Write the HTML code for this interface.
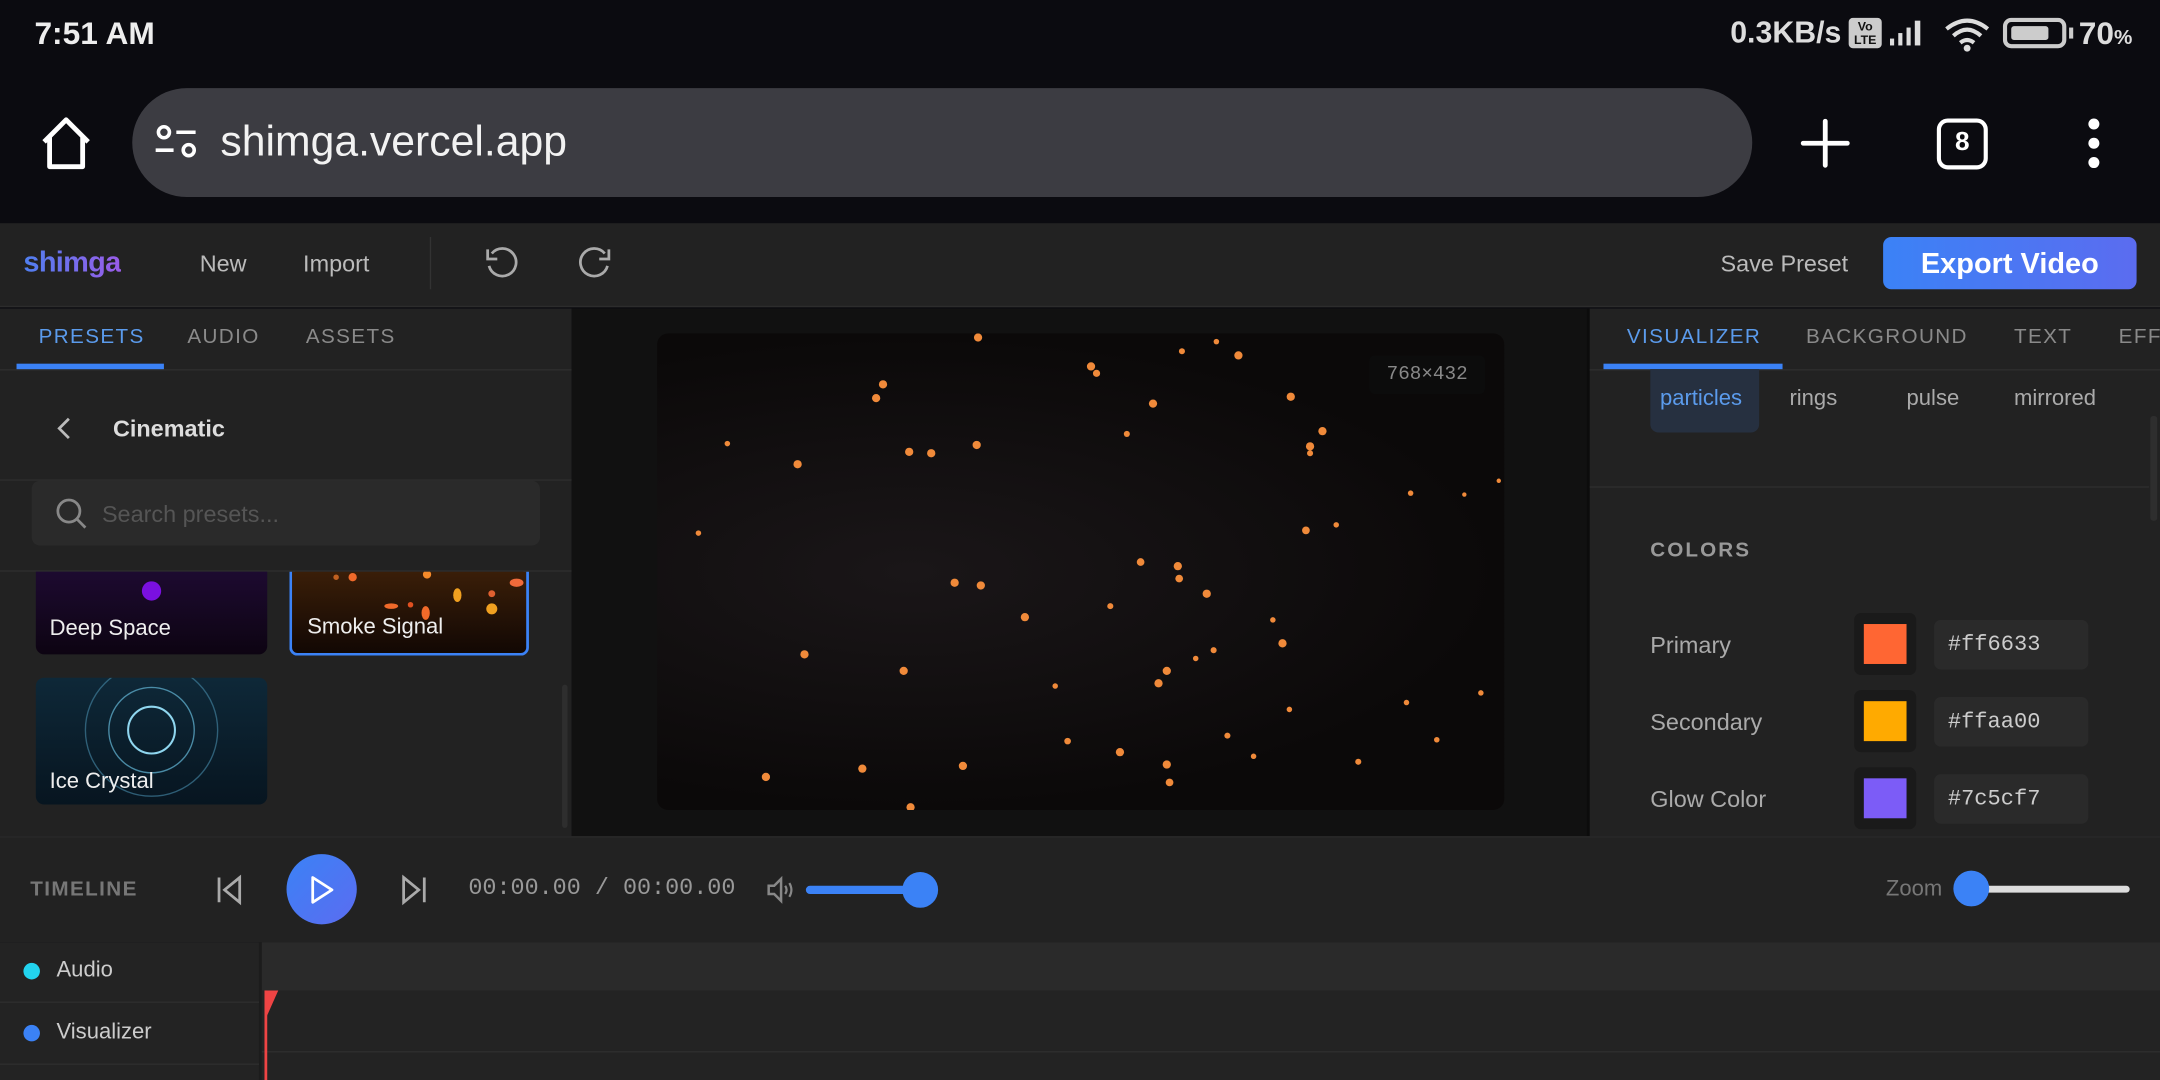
<!DOCTYPE html>
<html><head><meta charset="utf-8"><style>
*{margin:0;padding:0;box-sizing:border-box}
html,body{width:2160px;height:1080px;overflow:hidden;background:#0b0b10}
#w{position:absolute;left:0;top:0;width:1568px;height:784px;transform:scale(1.377551);transform-origin:0 0;font-family:"Liberation Sans",sans-serif;color:#ddd}
.a{position:absolute}
.tab{position:absolute;font-size:15px;letter-spacing:1px;color:#8a8a8a}
.mono{font-family:"Liberation Mono",monospace}
</style></head><body><div id="w">
<div class="a" style="left:0;top:0;width:1568px;height:162px;background:#0b0b10"></div>
<div class="a" style="left:25px;top:11px;font-size:23px;font-weight:bold;color:#eee">7:51 AM</div>
<div class="a" style="left:1256px;top:11px;font-size:22px;font-weight:bold;color:#ddd">0.3KB/s</div>
<div class="a" style="left:1342px;top:13px;width:24px;height:22px;background:#ccc;border-radius:3px;font-size:9px;line-height:10px;color:#111;text-align:center;font-weight:bold;padding-top:1px">Vo<br>LTE</div>
<svg class="a" style="left:1370px;top:12px" width="30" height="24"><rect x="2" y="16" width="3" height="5" fill="#ddd"/><rect x="8" y="12" width="3" height="9" fill="#ddd"/><rect x="14" y="8" width="3" height="13" fill="#ddd"/><rect x="20" y="3" width="4" height="18" fill="#ddd"/></svg>
<svg class="a" style="left:1410px;top:10px" width="36" height="30"><path d="M3 11 Q18 -1 33 11" stroke="#ddd" stroke-width="3" fill="none"/><path d="M8 16 Q18 7 28 16" stroke="#ddd" stroke-width="3" fill="none"/><path d="M13 21 Q18 17 23 21" stroke="#ddd" stroke-width="3" fill="none"/><circle cx="18" cy="25" r="2.5" fill="#ddd"/></svg>
<div class="a" style="left:1454px;top:13px;width:46px;height:22px;border:3px solid #ccc;border-radius:6px"><div style="margin:3px;width:27px;height:10px;background:#ccc;border-radius:2px"></div></div>
<div class="a" style="left:1502px;top:20px;width:3px;height:8px;background:#ccc"></div>
<div class="a" style="left:1509px;top:11px;font-size:23px;font-weight:bold;color:#ddd">70<span style="font-size:15px">%</span></div>
<svg class="a" style="left:28px;top:84px" width="40" height="40"><path d="M4 19 L20 3 L36 19 M8 15 V37 H32 V15" stroke="#fff" stroke-width="3.5" fill="none" stroke-linejoin="round"/></svg>
<div class="a" style="left:96px;top:64px;width:1176px;height:79px;background:#3c3c42;border-radius:40px"></div>
<svg class="a" style="left:110px;top:88px" width="36" height="32"><circle cx="9" cy="8" r="4" stroke="#fff" stroke-width="2.6" fill="none"/><line x1="18" y1="8" x2="32" y2="8" stroke="#fff" stroke-width="2.6"/><line x1="3" y1="21" x2="16" y2="21" stroke="#fff" stroke-width="2.6"/><circle cx="27" cy="21" r="4" stroke="#fff" stroke-width="2.6" fill="none"/></svg>
<div class="a" style="left:160px;top:85px;font-size:31px;color:#f2f2f2">shimga.vercel.app</div>
<svg class="a" style="left:1306px;top:85px" width="38" height="38"><path d="M19 3V35M3 19H35" stroke="#fff" stroke-width="3.5" stroke-linecap="round"/></svg>
<div class="a" style="left:1406px;top:86px;width:37px;height:37px;border:3.5px solid #fff;border-radius:8px;text-align:center;font-weight:bold;font-size:19px;line-height:30px;color:#fff">8</div>
<svg class="a" style="left:1510px;top:84px" width="20" height="40"><circle cx="10" cy="6" r="4" fill="#fff"/><circle cx="10" cy="20" r="4" fill="#fff"/><circle cx="10" cy="34" r="4" fill="#fff"/></svg>
<div class="a" style="left:0;top:162px;width:1568px;height:61px;background:#222;border-bottom:1px solid #2c2c2c"></div>
<div class="a" style="left:17px;top:179px;font-size:21px;font-weight:bold;background:linear-gradient(90deg,#4f7ff0,#9a5ce8);-webkit-background-clip:text;color:transparent;letter-spacing:-.5px">shimga</div>
<div class="a" style="left:145px;top:182px;font-size:17px;color:#bbb">New</div>
<div class="a" style="left:220px;top:182px;font-size:17px;color:#bbb">Import</div>
<div class="a" style="left:312px;top:172px;width:1px;height:38px;background:#333"></div>
<svg class="a" style="left:350px;top:177px" width="30" height="28"><path d="M7 7 A10 10 0 1 1 5 16" stroke="#aaa" stroke-width="2" fill="none"/><path d="M4 4 V11 H11" stroke="#aaa" stroke-width="2" fill="none"/></svg>
<svg class="a" style="left:416px;top:177px" width="30" height="28"><path d="M23 7 A10 10 0 1 0 25 16" stroke="#aaa" stroke-width="2" fill="none"/><path d="M26 4 V11 H19" stroke="#aaa" stroke-width="2" fill="none"/></svg>
<div class="a" style="left:1249px;top:182px;font-size:17px;color:#bbb">Save Preset</div>
<div class="a" style="left:1367px;top:172px;width:184px;height:38px;border-radius:6px;background:linear-gradient(90deg,#3b82f6,#5b6cf0);color:#fff;font-weight:bold;font-size:21px;text-align:center;line-height:39px">Export Video</div>
<div class="a" style="left:0;top:224px;width:415px;height:383px;background:#222"></div>
<div class="a" style="left:0;top:268px;width:415px;height:1px;background:#2e2e2e"></div>
<div class="tab" style="left:28px;top:236px;color:#5b9bec">PRESETS</div>
<div class="a" style="left:12px;top:264px;width:107px;height:4px;background:#3b82f6"></div>
<div class="tab" style="left:136px;top:236px">AUDIO</div>
<div class="tab" style="left:222px;top:236px">ASSETS</div>
<svg class="a" style="left:38px;top:301px" width="16" height="20"><path d="M12 3 L5 10 L12 17" stroke="#bbb" stroke-width="2" fill="none"/></svg>
<div class="a" style="left:82px;top:302px;font-size:17px;font-weight:bold;color:#ddd">Cinematic</div>
<div class="a" style="left:0;top:348px;width:415px;height:1px;background:#2e2e2e"></div>
<div class="a" style="left:23px;top:349px;width:369px;height:47px;background:#2a2a2a;border-radius:6px"></div>
<svg class="a" style="left:40px;top:361px" width="24" height="24"><circle cx="10" cy="10" r="8" stroke="#888" stroke-width="2" fill="none"/><path d="M16 16 L22 22" stroke="#888" stroke-width="2"/></svg>
<div class="a" style="left:74px;top:364px;font-size:17px;color:#555">Search presets...</div>
<div class="a" style="left:0;top:414px;width:415px;height:1px;background:#2e2e2e"></div>
<div class="a" style="left:26px;top:415px;width:168px;height:60px;background:linear-gradient(#1d0a30,#0d0412);border-radius:0 0 6px 6px"></div>
<div class="a" style="left:103px;top:422px;width:14px;height:14px;border-radius:50%;background:#7a10e0"></div>
<div class="a" style="left:36px;top:448px;font-size:16px;color:#eee">Deep Space</div>
<div class="a" style="left:210px;top:415px;width:174px;height:61px;background:linear-gradient(#3a1e08,#120804);border:2px solid #3b82f6;border-top:none;border-radius:0 0 6px 6px;overflow:hidden">
<svg width="174" height="60"><circle cx="44" cy="4" r="3" fill="#f06a2a"/><circle cx="98" cy="2" r="3" fill="#f58a2a"/><ellipse cx="120" cy="17" rx="3" ry="5" fill="#f0a020"/><ellipse cx="97" cy="30" rx="3" ry="5" fill="#f06a2a"/><circle cx="145" cy="16" r="2.5" fill="#e06030"/><circle cx="145" cy="27" r="4" fill="#f0a020"/><ellipse cx="163" cy="8" rx="5" ry="3" fill="#f06a3a"/><ellipse cx="72" cy="25" rx="5" ry="2" fill="#f06a2a"/><circle cx="86" cy="24" r="2" fill="#e05020"/><circle cx="32" cy="4" r="2" fill="#c06020"/></svg></div>
<div class="a" style="left:223px;top:447px;font-size:16px;color:#eee">Smoke Signal</div>
<div class="a" style="left:26px;top:492px;width:168px;height:92px;background:linear-gradient(#0e2838,#071520);border-radius:6px;overflow:hidden">
<svg width="168" height="92"><circle cx="84" cy="38" r="17" stroke="#8fd6ef" stroke-width="1.5" fill="none"/><circle cx="84" cy="38" r="31" stroke="#5aa6c4" stroke-width="1" fill="none" opacity=".8"/><circle cx="84" cy="38" r="48" stroke="#3f7c98" stroke-width="1" fill="none" opacity=".7"/></svg></div>
<div class="a" style="left:36px;top:559px;font-size:16px;color:#eee">Ice Crystal</div>
<div class="a" style="left:408px;top:497px;width:4px;height:104px;background:#2e2e2e;border-radius:2px"></div>
<div class="a" style="left:415px;top:224px;width:737px;height:383px;background:#111"></div>
<div class="a" style="left:477px;top:242px;width:615px;height:346px;background:radial-gradient(ellipse at 30% 50%,#1a1618,#0b0909 70%);border-radius:8px;overflow:hidden">
<svg width="615" height="346" viewBox="477 242 615 346"><g fill="#f08a3a">
<circle cx="710" cy="245" r="3"/><circle cx="641" cy="279" r="3"/><circle cx="636" cy="289" r="3"/><circle cx="792" cy="266" r="3"/><circle cx="796" cy="271" r="2.6"/><circle cx="858" cy="255" r="2.2"/><circle cx="899" cy="258" r="3"/><circle cx="937" cy="288" r="3"/><circle cx="837" cy="293" r="3"/><circle cx="818" cy="315" r="2.2"/><circle cx="960" cy="313" r="3"/><circle cx="951" cy="324" r="3"/><circle cx="951" cy="329" r="2.2"/><circle cx="660" cy="328" r="3"/><circle cx="676" cy="329" r="3"/><circle cx="709" cy="323" r="3"/><circle cx="579" cy="337" r="3"/><circle cx="1024" cy="358" r="2"/><circle cx="948" cy="385" r="2.8"/><circle cx="970" cy="381" r="2"/><circle cx="828" cy="408" r="2.8"/><circle cx="855" cy="411" r="3"/><circle cx="856" cy="420" r="2.8"/><circle cx="693" cy="423" r="3"/><circle cx="712" cy="425" r="3"/><circle cx="876" cy="431" r="3"/><circle cx="744" cy="448" r="3"/><circle cx="806" cy="440" r="2.2"/><circle cx="931" cy="467" r="3"/><circle cx="881" cy="472" r="2.2"/><circle cx="868" cy="478" r="2"/><circle cx="584" cy="475" r="3"/><circle cx="656" cy="487" r="3"/><circle cx="847" cy="487" r="3"/><circle cx="841" cy="496" r="3"/><circle cx="699" cy="556" r="3"/><circle cx="626" cy="558" r="3"/><circle cx="556" cy="564" r="3"/><circle cx="661" cy="586" r="3"/><circle cx="775" cy="538" r="2.4"/><circle cx="813" cy="546" r="3"/><circle cx="847" cy="555" r="3"/><circle cx="849" cy="568" r="2.8"/><circle cx="891" cy="534" r="2.2"/><circle cx="986" cy="553" r="2.2"/><circle cx="1043" cy="537" r="2"/><circle cx="1021" cy="510" r="2"/><circle cx="1075" cy="503" r="2"/><circle cx="883" cy="248" r="2"/><circle cx="924" cy="450" r="2"/><circle cx="936" cy="515" r="2"/><circle cx="528" cy="322" r="2"/><circle cx="507" cy="387" r="2"/><circle cx="766" cy="498" r="2"/><circle cx="910" cy="549" r="2"/><circle cx="1088" cy="349" r="1.6"/><circle cx="1063" cy="359" r="1.6"/>
</g></svg></div>
<div class="a mono" style="left:994px;top:258px;width:84px;height:28px;background:#0c0c0c;border-radius:4px;font-size:14px;color:#888;text-align:center;line-height:28px">768×432</div>
<div class="a" style="left:1152px;top:224px;width:416px;height:383px;background:#222"></div>
<div class="a" style="left:1152px;top:224px;width:2px;height:383px;background:#0c0c0c"></div>
<div class="a" style="left:1154px;top:268px;width:414px;height:1px;background:#2e2e2e"></div>
<div class="tab" style="left:1181px;top:236px;color:#5b9bec">VISUALIZER</div>
<div class="a" style="left:1164px;top:264px;width:130px;height:4px;background:#3b82f6"></div>
<div class="tab" style="left:1311px;top:236px">BACKGROUND</div>
<div class="tab" style="left:1462px;top:236px">TEXT</div>
<div class="tab" style="left:1538px;top:236px">EFF</div>
<div class="a" style="left:1198px;top:268px;width:79px;height:46px;background:#263040;border-radius:0 0 6px 6px"></div>
<div class="a" style="left:1205px;top:281px;font-size:16px;color:#5b9bec">particles</div>
<div class="a" style="left:1299px;top:281px;font-size:16px;color:#aaa">rings</div>
<div class="a" style="left:1384px;top:281px;font-size:16px;color:#aaa">pulse</div>
<div class="a" style="left:1462px;top:281px;font-size:16px;color:#aaa">mirrored</div>
<div class="a" style="left:1561px;top:302px;width:5px;height:76px;background:#2e2e2e;border-radius:2px"></div>
<div class="a" style="left:1154px;top:353px;width:406px;height:1px;background:#2e2e2e"></div>
<div class="a" style="left:1198px;top:391px;font-size:15px;font-weight:bold;letter-spacing:1.5px;color:#999">COLORS</div>
<div class="a" style="left:1198px;top:459px;font-size:17px;color:#aaa">Primary</div>
<div class="a" style="left:1198px;top:515px;font-size:17px;color:#aaa">Secondary</div>
<div class="a" style="left:1198px;top:571px;font-size:17px;color:#aaa">Glow Color</div>
<div class="a" style="left:1346px;top:445px;width:45px;height:45px;background:#1a1a1a;border-radius:5px;padding:8px 7px"><div style="width:100%;height:100%;background:#ff6633"></div></div>
<div class="a" style="left:1346px;top:501px;width:45px;height:45px;background:#1a1a1a;border-radius:5px;padding:8px 7px"><div style="width:100%;height:100%;background:#ffaa00"></div></div>
<div class="a" style="left:1346px;top:557px;width:45px;height:45px;background:#1a1a1a;border-radius:5px;padding:8px 7px"><div style="width:100%;height:100%;background:#7c5cf7"></div></div>
<div class="a mono" style="left:1404px;top:450px;width:112px;height:36px;background:#2a2a2a;border-radius:5px;padding-left:10px;line-height:36px;font-size:16px;color:#ccc">#ff6633</div>
<div class="a mono" style="left:1404px;top:506px;width:112px;height:36px;background:#2a2a2a;border-radius:5px;padding-left:10px;line-height:36px;font-size:16px;color:#ccc">#ffaa00</div>
<div class="a mono" style="left:1404px;top:562px;width:112px;height:36px;background:#2a2a2a;border-radius:5px;padding-left:10px;line-height:36px;font-size:16px;color:#ccc">#7c5cf7</div>
<div class="a" style="left:0;top:607px;width:1568px;height:77px;background:#222;border-top:1px solid #2a2a2a"></div>
<div class="a" style="left:22px;top:637px;font-size:15px;letter-spacing:1px;color:#777;font-weight:bold">TIMELINE</div>
<svg class="a" style="left:155px;top:634px" width="24" height="24"><path d="M4 3V21M19 3L8 12L19 21Z" stroke="#aaa" stroke-width="2" fill="none"/></svg>
<div class="a" style="left:208px;top:620px;width:51px;height:51px;border-radius:50%;background:linear-gradient(135deg,#3b82f6,#5b6cf0)"></div>
<svg class="a" style="left:222px;top:634px" width="24" height="24"><path d="M5 3L19 12L5 21Z" stroke="#fff" stroke-width="2" fill="none" stroke-linejoin="round"/></svg>
<svg class="a" style="left:288px;top:634px" width="24" height="24"><path d="M20 3V21M5 3L16 12L5 21Z" stroke="#aaa" stroke-width="2" fill="none"/></svg>
<div class="a mono" style="left:340px;top:636px;font-size:17px;color:#999">00:00.00 / 00:00.00</div>
<svg class="a" style="left:555px;top:635px" width="24" height="22"><path d="M3 8H7L12 3V19L7 14H3Z" stroke="#888" stroke-width="1.8" fill="none"/><path d="M15 8Q17 11 15 14M18 6Q21 11 18 16" stroke="#888" stroke-width="1.6" fill="none"/></svg>
<div class="a" style="left:585px;top:643px;width:82px;height:6px;background:#3b82f6;border-radius:3px"></div>
<div class="a" style="left:655px;top:633px;width:26px;height:26px;border-radius:50%;background:#3b82f6"></div>
<div class="a" style="left:1369px;top:637px;font-size:16px;color:#777">Zoom</div>
<div class="a" style="left:1432px;top:643px;width:114px;height:5px;background:#ddd;border-radius:3px"></div>
<div class="a" style="left:1418px;top:632px;width:26px;height:26px;border-radius:50%;background:#3b82f6"></div>
<div class="a" style="left:0;top:684px;width:1568px;height:100px;background:#232323"></div>
<div class="a" style="left:190px;top:684px;width:1378px;height:35px;background:#2a2a2a"></div>
<div class="a" style="left:0;top:727px;width:190px;height:1px;background:#2e2e2e"></div>
<div class="a" style="left:0;top:772px;width:190px;height:1px;background:#2e2e2e"></div>
<div class="a" style="left:190px;top:763px;width:1378px;height:1px;background:#2e2e2e"></div>
<div class="a" style="left:188px;top:684px;width:2px;height:100px;background:#1c1c1c"></div>
<div class="a" style="left:17px;top:699px;width:12px;height:12px;border-radius:50%;background:#22d3ee"></div>
<div class="a" style="left:41px;top:696px;font-size:16px;color:#ccc">Audio</div>
<div class="a" style="left:17px;top:744px;width:12px;height:12px;border-radius:50%;background:#3b82f6"></div>
<div class="a" style="left:41px;top:741px;font-size:16px;color:#ccc">Visualizer</div>
<div class="a" style="left:192px;top:719px;width:2px;height:65px;background:#ef4444"></div>
<svg class="a" style="left:192px;top:719px" width="12" height="20"><path d="M0 0H10L2 18H0Z" fill="#ef4444"/></svg>
</div></body></html>
